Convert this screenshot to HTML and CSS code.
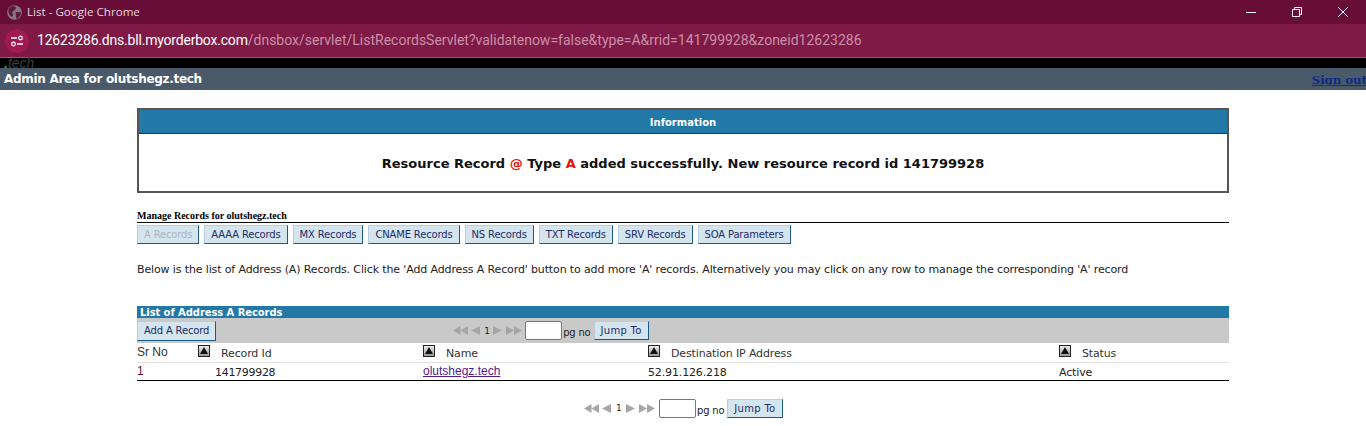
FILE: index.html
```html
<!DOCTYPE html>
<html lang="en">
<head>
  <meta charset="UTF-8" />
  <title>List - Google Chrome</title>
  <link rel="stylesheet" href="styles.css">
</head>
<body>
  <!-- Browser window chrome -->
  <div class="titlebar">
    <svg class="globe" width="15" height="15" viewBox="0 0 16 16">
      <circle cx="8" cy="8" r="7.8" fill="#8a7480"/>
      <path d="M3 2.5 C5 1 8 1 9.5 2 C10 4 8 5 7 6 C5.5 7 5 8.5 6.5 10 C6.5 12 5 12.5 4 12 C2 10 1 7 1.5 5 Z M9 8 C11 7 13.5 7.5 15 8 C15 11 13 13.5 10.5 15 C9 13 10 11 9 8 Z" fill="#5c1a3c"/>
    </svg>
    <span class="window-title">List - Google Chrome</span>
    <div class="window-controls">
      <svg width="12" height="12" viewBox="0 0 12 12"><path d="M1 6.5 H11" stroke="#fff" fill="none"/></svg>
      <svg width="12" height="12" viewBox="0 0 12 12"><path d="M1.5 3.5 H8.5 V10.5 H1.5 Z M3.5 3.5 V1.5 H10.5 V8.5 H8.5" stroke="#fff" fill="none"/></svg>
      <svg width="12" height="12" viewBox="0 0 12 12"><path d="M1 1 L11 11 M11 1 L1 11" stroke="#fff" fill="none"/></svg>
    </div>
  </div>
  <div class="urlbar">
    <span class="site-info">
      <svg width="14" height="12" viewBox="0 0 14 12">
        <path d="M1 3 H7" stroke="#fff" stroke-width="1.5" fill="none"/>
        <circle cx="10.5" cy="3" r="1.8" fill="none" stroke="#fff" stroke-width="1.2"/>
        <path d="M7 9 H13" stroke="#fff" stroke-width="1.5" fill="none"/>
        <circle cx="3.5" cy="9" r="1.8" fill="none" stroke="#fff" stroke-width="1.2"/>
      </svg>
    </span>
    <span class="url"><span class="url-host">12623286.dns.bll.myorderbox.com</span>/dnsbox/servlet/ListRecordsServlet?validatenow=false&amp;type=A&amp;rrid=141799928&amp;zoneid12623286</span>
  </div>

  <!-- Site header -->
  <div class="logo-strip"><span class="logo-dot">.</span>tech</div>
  <div class="adminbar">
    <span class="admin-title">Admin Area for olutshegz.tech</span>
    <a class="signout" href="#">Sign out</a>
  </div>

  <div class="content">
    <div class="infobox">
      <div class="infobox-head">Information</div>
      <div class="infobox-body">Resource Record <span class="red">@</span> Type <span class="red">A</span> added successfully. New resource record id 141799928</div>
    </div>

    <div class="manage-title">Manage Records for olutshegz.tech</div>
    <div class="tabs">
      <button class="btn btn-off">A Records</button>
      <button class="btn">AAAA Records</button>
      <button class="btn">MX Records</button>
      <button class="btn">CNAME Records</button>
      <button class="btn">NS Records</button>
      <button class="btn">TXT Records</button>
      <button class="btn">SRV Records</button>
      <button class="btn">SOA Parameters</button>
    </div>

    <p class="intro">Below is the list of Address (A) Records. Click the 'Add Address A Record' button to add more 'A' records. Alternatively you may click on any row to manage the corresponding 'A' record</p>

    <div class="list-title">List of Address A Records</div>
    <div class="list-tools">
      <button class="btn add-btn">Add A Record</button>
      <div class="pager pager-top">
        <svg class="arrows-back" width="28" height="9" viewBox="0 0 28 9"><path d="M0 4.5 L7.5 0 V9 Z M7.5 4.5 L15 0 V9 Z M18 4.5 L27 0 V9 Z" fill="#a6a6a6"/></svg>
        <span class="pager-num">1</span>
        <svg class="arrows-next" width="29" height="9" viewBox="0 0 29 9"><path d="M0 0 L9 4.5 L0 9 Z M13 0 L21 4.5 L13 9 Z M21 0 L29 4.5 L21 9 Z" fill="#a6a6a6"/></svg>
        <input class="pager-input" type="text">
        <span class="pager-label">pg no</span>
        <button class="btn">Jump To</button>
      </div>
    </div>

    <table class="records">
      <thead>
        <tr>
          <th class="col-sr"><span class="sr-label">Sr No</span></th>
          <th class="col-id"><span class="sort"></span><span class="th-label">Record Id</span></th>
          <th class="col-name"><span class="sort"></span><span class="th-label">Name</span></th>
          <th class="col-ip"><span class="sort"></span><span class="th-label">Destination IP Address</span></th>
          <th class="col-status"><span class="sort"></span><span class="th-label">Status</span></th>
        </tr>
      </thead>
      <tbody>
        <tr>
          <td class="sr-cell">1</td>
          <td class="id-cell">141799928</td>
          <td class="name-cell"><a class="name-link" href="#">olutshegz.tech</a></td>
          <td>52.91.126.218</td>
          <td>Active</td>
        </tr>
      </tbody>
    </table>

    <div class="pager pager-bottom">
      <svg class="arrows-back" width="28" height="9" viewBox="0 0 28 9"><path d="M0 4.5 L7.5 0 V9 Z M7.5 4.5 L15 0 V9 Z M18 4.5 L27 0 V9 Z" fill="#a6a6a6"/></svg>
      <span class="pager-num">1</span>
      <svg class="arrows-next" width="29" height="9" viewBox="0 0 29 9"><path d="M0 0 L9 4.5 L0 9 Z M13 0 L21 4.5 L13 9 Z M21 0 L29 4.5 L21 9 Z" fill="#a6a6a6"/></svg>
      <input class="pager-input" type="text">
      <span class="pager-label">pg no</span>
      <button class="btn">Jump To</button>
    </div>
  </div>
</body>
</html>
```

FILE: styles.css
```css
* {
  box-sizing: border-box;
}
html, body {
  height: 426px;
  overflow: hidden;
}
body {
  margin: 0;
  font-family: "DejaVu Sans", Verdana, sans-serif;
  font-size: 11px;
  color: #222;
  background-color: #fff;
}

/* Browser chrome */
.titlebar {
  height: 24px;
  background-color: #670d37;
  display: flex;
  align-items: center;
  padding-left: 7px;
  color: #e6d6dd;
  font-family: "Open Sans", sans-serif;
  font-size: 11.6px;
}
.window-title {
  margin: 0 0 2px 5px;
}
.window-controls {
  margin-left: auto;
  display: flex;
  gap: 34px;
  padding-right: 17px;
}
.urlbar {
  height: 34px;
  background-color: #7f1a47;
  border-bottom: 1px solid #b04a70;
  display: flex;
  align-items: center;
  padding-left: 5px;
  font-family: "Roboto", sans-serif;
  font-size: 14px;
  color: #c98fa8;
}
.site-info {
  width: 24px;
  height: 24px;
  border-radius: 12px;
  background-color: #a01a52;
  display: flex;
  align-items: center;
  justify-content: center;
  margin-right: 8px;
}
.url {
  margin-bottom: 2px;
}
.url-host {
  color: #fff;
  letter-spacing: -0.2px;
}

/* Site header */
.logo-strip {
  height: 10px;
  background-color: #000;
  color: #3a3a3a;
  font-family: "Liberation Sans", sans-serif;
  font-size: 14px;
  font-style: italic;
  line-height: 10px;
  padding-left: 4px;
}
.logo-dot {
  color: #1f9a3a;
  font-weight: bold;
}
.adminbar {
  height: 22px;
  background-color: #4a5a6b;
  display: flex;
  justify-content: space-between;
  align-items: center;
  padding-left: 4px;
}
.admin-title {
  color: #fff;
  font-size: 12px;
  font-weight: bold;
  letter-spacing: -0.3px;
}
.signout {
  color: #0b2a86;
  font-family: "DejaVu Serif", serif;
  font-size: 11.7px;
  font-weight: bold;
  white-space: nowrap;
  margin-right: -1px;
  margin-top: 2px;
}

/* Main content */
.content {
  width: 1092px;
  margin: 18px 0 0 137px;
}
.infobox {
  height: 85px;
  border: 2px solid #555;
}
.infobox-head {
  height: 24px;
  background-color: #2279a8;
  border-bottom: 1px solid #333;
  color: #fff;
  font-size: 10px;
  font-weight: bold;
  line-height: 25px;
  text-align: center;
}
.infobox-body {
  font-size: 13px;
  font-weight: bold;
  color: #111;
  text-align: center;
  padding-top: 22px;
}
.red {
  color: #e8100c;
}
.manage-title {
  margin-top: 18px;
  height: 12px;
  border-bottom: 1px solid #000;
  font-family: "Liberation Serif", serif;
  font-size: 10px;
  font-weight: bold;
  line-height: 10px;
  color: #000;
}
.tabs {
  display: flex;
  gap: 5px;
  margin-top: 2px;
}
.btn {
  height: 19px;
  padding: 0 6px;
  font-family: "DejaVu Sans", Verdana, sans-serif;
  font-size: 10px;
  letter-spacing: -0.16px;
  color: #1c2b66;
  background-color: #d5e5f0;
  border: 1px solid #bcd;
  border-right-color: #1c5a86;
  border-bottom-color: #1c5a86;
  white-space: nowrap;
}
.btn-off {
  color: #a9b6bf;
}
.intro {
  margin: 19px 0 0;
  font-size: 11px;
  letter-spacing: -0.13px;
  line-height: 13px;
}
.list-title {
  margin-top: 30px;
  height: 12px;
  background-color: #2279a8;
  color: #fff;
  font-size: 10px;
  font-weight: bold;
  letter-spacing: -0.08px;
  line-height: 13px;
  padding-left: 3px;
}
.list-tools {
  height: 25px;
  background-color: #c9c9c9;
  display: flex;
  align-items: center;
}
.add-btn {
  height: 20px;
}
.pager {
  display: flex;
  align-items: center;
  font-size: 10px;
}
.pager .btn {
  letter-spacing: 0.3px;
}
.pager-top {
  margin-left: 237px;
}
.pager-bottom {
  margin: 18px 0 0 447px;
}
.pager-num {
  width: 6px;
  font-size: 9px;
  margin: 0 3px;
  color: #222;
}
.arrows-back {
  width: 28px;
}
.arrows-next {
  width: 29px;
}
.pager-input {
  width: 37px;
  height: 19px;
  margin-left: 3px;
  background-color: #fff;
  border: 1px solid #777;
  border-radius: 2px;
  padding: 0;
}
.pager-bottom .pager-input {
  margin-left: 4px;
}
.pager-bottom .pager-num {
  margin: 0 4px;
}
.pager-label {
  margin: 4px 3px 0 1px;
  font-size: 10px;
  letter-spacing: -0.2px;
}
.records {
  width: 100%;
  border-collapse: collapse;
  table-layout: fixed;
  border-bottom: 1px solid #000;
}
.records th {
  height: 19px;
  padding: 0;
  text-align: left;
  font-weight: normal;
  font-size: 11px;
  letter-spacing: -0.14px;
  color: #333;
  border-bottom: 1px solid #e2e2e2;
  vertical-align: top;
}
.records td {
  height: 18px;
  padding: 2px 0 0;
  font-size: 11px;
  letter-spacing: -0.14px;
  color: #222;
}
.col-sr { width: 61px; }
.col-id { width: 225px; }
.col-name { width: 225px; }
.col-ip { width: 411px; }
.sort {
  display: inline-block;
  width: 12px;
  height: 12px;
  margin-top: 2px;
  border: 1px solid #222;
  background: linear-gradient(#eee, #999);
  position: relative;
  vertical-align: top;
}
.sort::after {
  content: "";
  position: absolute;
  left: 1px;
  top: 1px;
  border-left: 4px solid transparent;
  border-right: 4px solid transparent;
  border-bottom: 7px solid #111;
}
.th-label {
  display: inline-block;
  margin: 4px 0 0 11px;
}
.sr-label {
  font-family: "Liberation Sans", sans-serif;
  font-size: 12px;
  letter-spacing: 0;
  display: block;
  margin-top: 2px;
  white-space: nowrap;
}
.records .sr-cell {
  font-family: "Liberation Sans", sans-serif;
  font-size: 12px;
  color: #6b0f2f;
  padding-top: 0;
}
.records .id-cell {
  padding-left: 17px;
  letter-spacing: -0.3px;
}
.records .name-cell {
  padding-top: 0;
}
.name-link {
  font-family: "Liberation Sans", sans-serif;
  font-size: 12px;
  letter-spacing: 0;
  color: #551a8b;
}
```
